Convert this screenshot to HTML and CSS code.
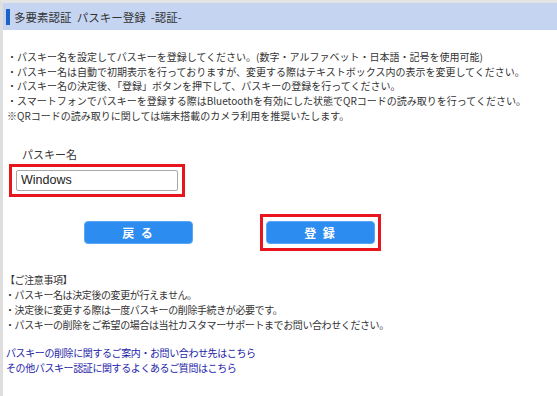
FILE: index.html
```html
<!DOCTYPE html>
<html lang="ja">
<head>
  <meta charset="UTF-8" />
  <title>多要素認証 パスキー登録</title>
  <link rel="stylesheet" href="styles.css">
</head>
<body>
  <div class="page">
    <div class="title-bar">
      <span class="mark"></span>
      <h1 class="title">多要素認証&nbsp;&nbsp;パスキー登録&nbsp;&nbsp;-認証-</h1>
    </div>

    <div class="guide">
      <p>・パスキー名を設定してパスキーを登録してください。(数字・アルファベット・日本語・記号を使用可能)</p>
      <p>・パスキー名は自動で初期表示を行っておりますが、変更する際はテキストボックス内の表示を変更してください。</p>
      <p>・パスキー名の決定後、「登録」ボタンを押下して、パスキーの登録を行ってください。</p>
      <p>・スマートフォンでパスキーを登録する際はBluetoothを有効にした状態でQRコードの読み取りを行ってください。</p>
      <p>※QRコードの読み取りに関しては端末搭載のカメラ利用を推奨いたします。</p>
    </div>

    <div class="name-field">
      <label class="label" for="passkey-name">パスキー名</label>
      <div class="highlight">
        <input class="text-input" id="passkey-name" type="text" value="Windows">
      </div>
    </div>

    <div class="actions">
      <button class="btn" type="button">戻&nbsp;る</button>
      <div class="highlight">
        <button class="btn" type="button">登&nbsp;録</button>
      </div>
    </div>

    <div class="notes">
      <p>【ご注意事項】</p>
      <p>・パスキー名は決定後の変更が行えません。</p>
      <p>・決定後に変更する際は一度パスキーの削除手続きが必要です。</p>
      <p>・パスキーの削除をご希望の場合は当社カスタマーサポートまでお問い合わせください。</p>
    </div>

    <div class="links">
      <a href="#">パスキーの削除に関するご案内・お問い合わせ先はこちら</a>
      <a href="#">その他パスキー認証に関するよくあるご質問はこちら</a>
    </div>
  </div>
</body>
</html>
```

FILE: styles.css
```css
* {
  box-sizing: border-box;
  margin: 0;
  padding: 0;
}

body {
  background: #ffffff;
  font-family: "Noto Sans CJK JP", "Noto Sans", sans-serif;
  color: #333333;
  width: 557px;
  height: 396px;
  overflow: hidden;
}

.page {
  height: 100%;
  border-left: 3px solid #dedede;
  border-top: 3px solid #e4e4e4;
}

.title-bar {
  display: flex;
  align-items: center;
  height: 27px;
  background: #c5d5f1;
  padding-left: 3px;
}

.mark {
  width: 4px;
  height: 16px;
  background: #1b62c8;
  margin-right: 4px;
}

.title {
  font-size: 11.5px;
  font-weight: normal;
  color: #333333;
}

.guide {
  margin-top: 20px;
  padding-left: 4px;
  font-size: 10px;
  line-height: 14.7px;
  white-space: nowrap;
}

.name-field {
  margin-top: 22px;
  padding-left: 6px;
}

.label {
  display: block;
  font-size: 11px;
  line-height: 16px;
  padding-left: 13px;
  margin-bottom: 2px;
}

.highlight {
  display: inline-flex;
  border: 3px solid #e8141e;
  padding: 3px 4px;
}

.text-input {
  width: 162px;
  height: 21px;
  border: 1px solid #a8a8a8;
  border-radius: 2px;
  padding: 0 4px;
  font-family: "Liberation Sans", Arial, sans-serif;
  font-size: 12.5px;
  color: #222222;
}

.actions {
  display: flex;
  align-items: center;
  gap: 67px;
  margin-top: 17px;
  padding-left: 81px;
}

.actions .highlight {
  padding: 4px 3px;
}

.btn {
  width: 109px;
  height: 23px;
  border: 1px solid #5aa7f5;
  border-radius: 4px;
  background: #2d8cf0;
  color: #ffffff;
  font-family: "Noto Sans CJK JP", sans-serif;
  font-size: 12px;
  font-weight: bold;
  letter-spacing: 2px;
}

.notes {
  margin-top: 21px;
  padding-left: 2px;
  font-size: 10px;
  line-height: 15px;
  letter-spacing: -0.4px;
  white-space: nowrap;
}

.links {
  display: flex;
  flex-direction: column;
  margin-top: 13px;
  padding-left: 3px;
  font-size: 10px;
  line-height: 15px;
  letter-spacing: -0.4px;
}

.links a {
  color: #1d1da8;
  text-decoration: none;
}
```
